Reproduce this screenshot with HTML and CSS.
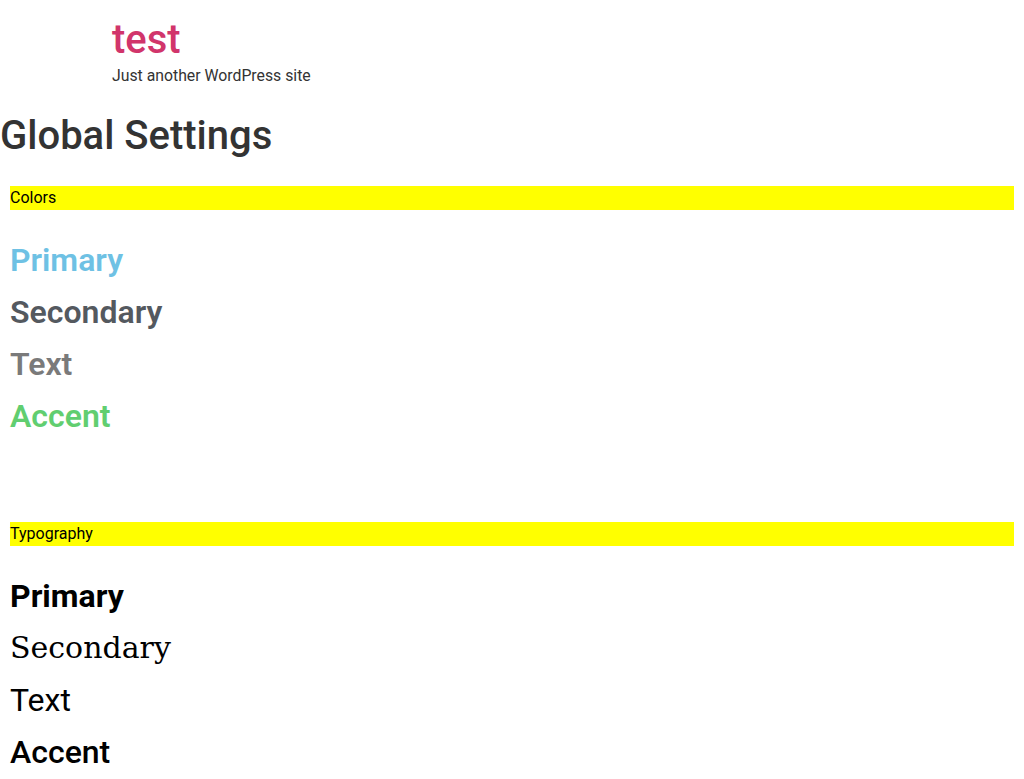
FILE: index.html
```html
<!DOCTYPE html>
<html>
<head>
<meta charset="utf-8">
<link rel="stylesheet" href="styles.css">
</head>
<body>
<header class="site-header">
  <div class="site-title">test</div>
  <div class="site-tagline">Just another WordPress site</div>
</header>
<h1 class="page-title">Global Settings</h1>
<section class="group">
  <div class="group-label">Colors</div>
  <div class="items">
    <div class="item c-primary">Primary</div>
    <div class="item c-secondary">Secondary</div>
    <div class="item c-text">Text</div>
    <div class="item c-accent">Accent</div>
  </div>
</section>
<section class="group group-typo">
  <div class="group-label">Typography</div>
  <div class="items">
    <div class="item t-primary">Primary</div>
    <div class="item t-secondary">Secondary</div>
    <div class="item t-text">Text</div>
    <div class="item t-accent">Accent</div>
  </div>
</section>
</body>
</html>
```
FILE: styles.css
```css
html, body {
  margin: 0;
  padding: 0;
  background: #fff;
  font-family: Roboto, "Liberation Sans", sans-serif;
}
.site-header {
  padding: 16px 0 0 112px;
}
.site-title {
  font-size: 40px;
  font-weight: 500;
  line-height: 48px;
  color: #d1356b;
}
.site-tagline {
  font-size: 15.8px;
  line-height: 24px;
  color: #333;
}
.page-title {
  margin: 20px 0 0 0;
  font-size: 40px;
  line-height: 56px;
  font-weight: 500;
  color: #333;
}
.group {
  padding: 0 10px;
  margin-top: 22px;
}
.group-typo {
  margin-top: 80px;
}
.group-label {
  background: #ffff00;
  color: #000;
  font-size: 16px;
  line-height: 24px;
}
.items {
  display: flex;
  flex-direction: column;
  padding-top: 24px;
}
.item {
  font-size: 32px;
  line-height: 52px;
}
.c-primary { color: #6ec1e4; font-weight: 600; }
.c-secondary { color: #54595f; font-weight: 600; }
.c-text { color: #7a7a7a; font-weight: 600; }
.c-accent { color: #61ce70; font-weight: 600; }
.t-primary { font-weight: 700; color: #000; }
.t-secondary { font-family: "DejaVu Serif", serif; font-weight: 400; color: #000; font-size: 30px; }
.t-text { font-weight: 400; color: #000; }
.t-accent { font-weight: 500; color: #000; }
```
